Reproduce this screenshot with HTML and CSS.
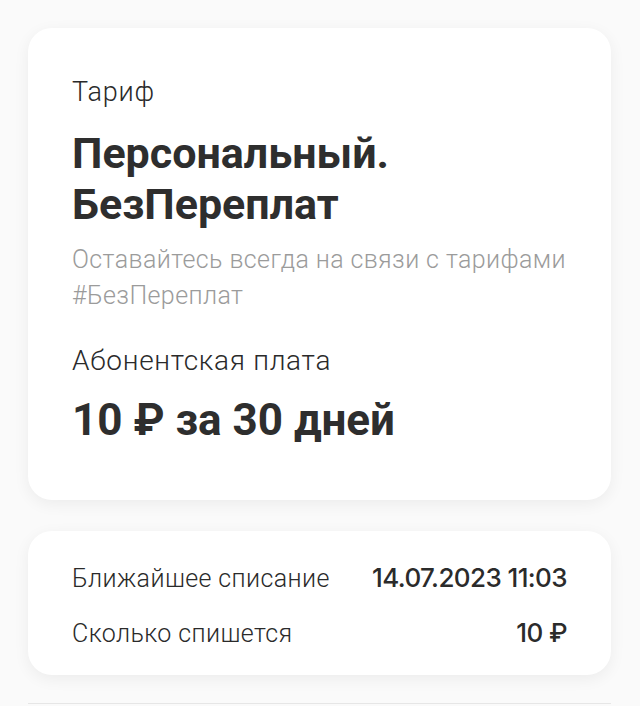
FILE: index.html
```html
<!DOCTYPE html>
<html lang="ru">
<head>
<meta charset="utf-8">
<link rel="stylesheet" href="styles.css">
</head>
<body>
<main class="page">
  <section class="card tariff">
    <div class="label">Тариф</div>
    <h1 class="title">Персональный.<br>БезПереплат</h1>
    <p class="desc">Оставайтесь всегда на связи с тарифами #БезПереплат</p>
    <div class="label fee-label">Абонентская плата</div>
    <div class="fee">10 ₽ за 30 дней</div>
  </section>
  <section class="card charge">
    <div class="row">
      <span class="key">Ближайшее списание</span>
      <span class="val">14.07.2023 11:03</span>
    </div>
    <div class="row">
      <span class="key">Сколько спишется</span>
      <span class="val">10 ₽</span>
    </div>
  </section>
  <div class="divider"></div>
</main>
</body>
</html>
```
FILE: styles.css
```css
* { box-sizing: border-box; }
html, body { margin: 0; padding: 0; }
body {
  background: #fafafa;
  font-family: Roboto, "Noto Sans", sans-serif;
  color: #2b2b2b;
  width: 640px;
  height: 706px;
  overflow: hidden;
}
.page {
  padding: 28px 29px 0 28px;
  display: flex;
  flex-direction: column;
}
.card {
  background: #fff;
  border-radius: 24px;
  box-shadow: 0 4px 16px rgba(0,0,0,0.06);
}
.tariff {
  height: 472px;
  padding: 48px 44px 0 44px;
}
.label {
  font-size: 27px;
  line-height: 32px;
  font-weight: 300;
  letter-spacing: 0.8px;
  color: #2a2a2a;
}
.title {
  margin: 20px 0 0 0;
  font-size: 43px;
  line-height: 51px;
  font-weight: 700;
  color: #2e2e2e;
}
.desc {
  margin: 12px 0 0 0;
  font-size: 25px;
  line-height: 36px;
  font-weight: 300;
  letter-spacing: 0.4px;
  color: #9b9b9b;
}
.fee-label {
  margin-top: 31px;
  font-size: 28px;
  letter-spacing: 0.7px;
}
.fee {
  margin-top: 18px;
  font-size: 44px;
  line-height: 50px;
  font-weight: 700;
  color: #2e2e2e;
}
.charge {
  margin-top: 31px;
  height: 144px;
  padding: 31px 44px 0 44px;
  display: flex;
  flex-direction: column;
  gap: 22px;
}
.row {
  display: flex;
  justify-content: space-between;
  align-items: baseline;
  font-size: 25px;
  line-height: 32px;
}
.key {
  color: #2a2a2a;
  font-weight: 300;
  letter-spacing: 0.4px;
}
.val {
  font-family: Inter, "Noto Sans", sans-serif;
  font-size: 26px;
  font-weight: 500;
  color: #2b2b2b;
  letter-spacing: -0.6px;
}
.divider {
  margin-top: 28px;
  height: 1px;
  background: #e6e6e6;
}
```
